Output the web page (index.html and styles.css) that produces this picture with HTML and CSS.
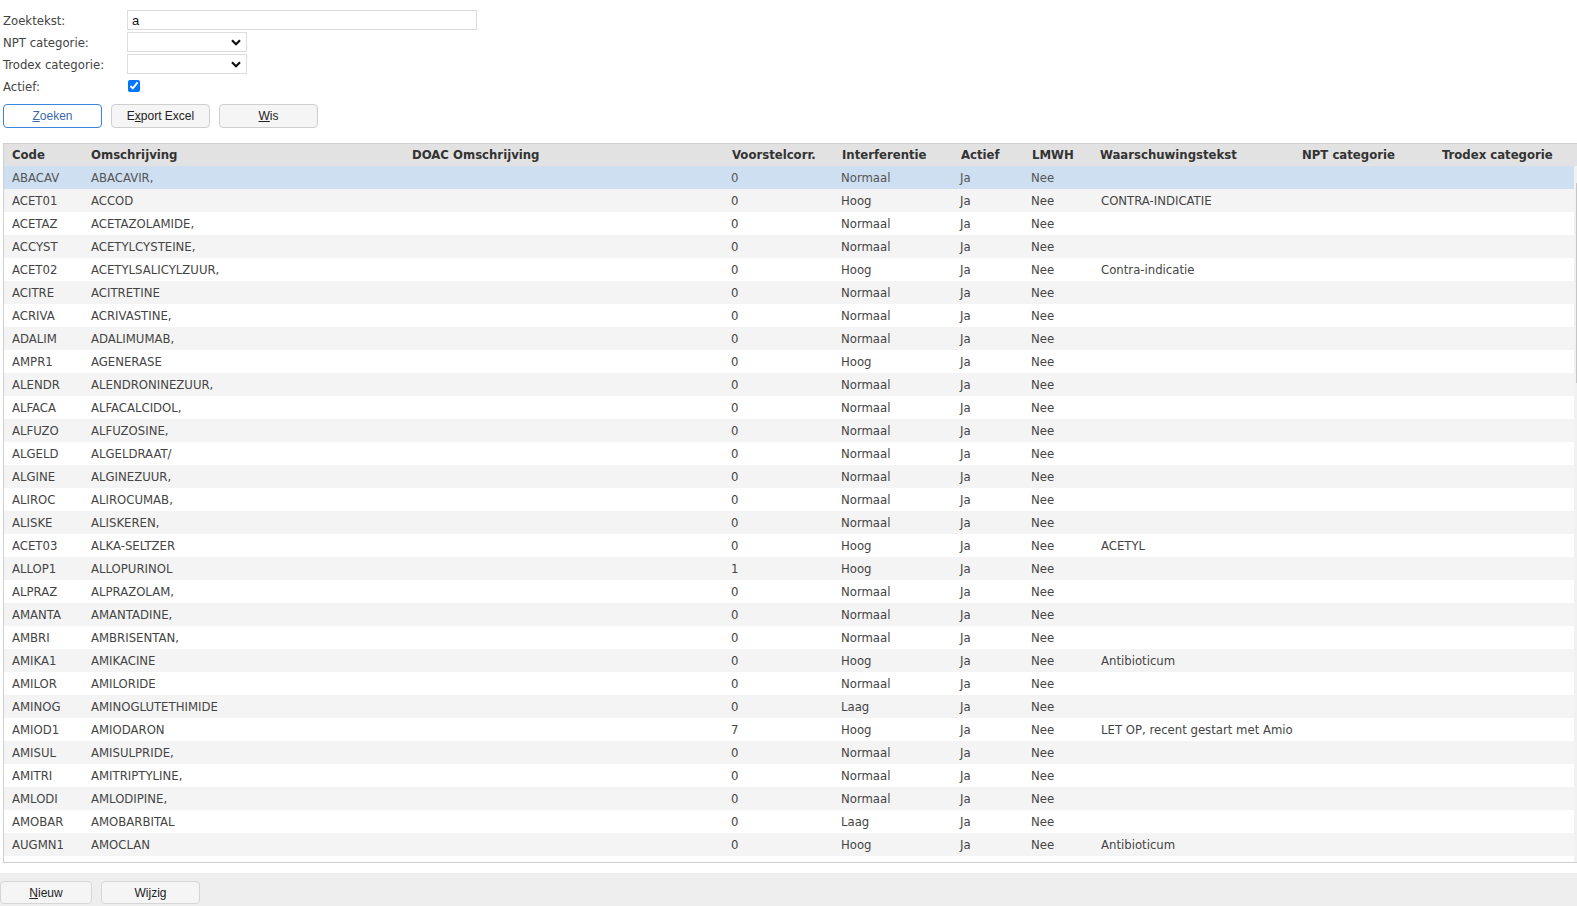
FILE: index.html
```html
<!DOCTYPE html>
<html lang="nl">
<head>
<meta charset="utf-8">
<title>Middelen</title>
<link rel="stylesheet" href="styles.css">
</head>
<body>
<div class="page">
  <form class="filters">
    <label class="lbl" for="q">Zoektekst:</label>
    <div class="ctl"><input id="q" class="text" type="text" value="a"></div>
    <label class="lbl" for="npt">NPT categorie:</label>
    <div class="ctl"><span class="select"><select id="npt"><option></option></select><svg class="chev" width="10" height="7" viewBox="0 0 10 7"><path d="M1 1.2 L5 5.2 L9 1.2" fill="none" stroke="#111" stroke-width="2.2"/></svg></span></div>
    <label class="lbl" for="tro">Trodex categorie:</label>
    <div class="ctl"><span class="select"><select id="tro"><option></option></select><svg class="chev" width="10" height="7" viewBox="0 0 10 7"><path d="M1 1.2 L5 5.2 L9 1.2" fill="none" stroke="#111" stroke-width="2.2"/></svg></span></div>
    <label class="lbl lbl-chk" for="act">Actief:</label>
    <div class="ctl ctl-chk"><input id="act" class="chk" type="checkbox" checked></div>
  </form>

  <div class="actions">
    <button type="button" class="btn btn-primary"><u>Z</u>oeken</button>
    <button type="button" class="btn">E<u>x</u>port Excel</button>
    <button type="button" class="btn"><u>W</u>is</button>
  </div>

  <div class="grid">
    <div class="grid-head">
      <table class="tbl">
        <colgroup>
          <col class="c1"><col class="c2"><col class="c3"><col class="c4"><col class="c5"><col class="c6"><col class="c7"><col class="c8"><col class="c9"><col class="c10">
        </colgroup>
        <thead>
          <tr>
            <th>Code</th><th>Omschrijving</th><th>DOAC Omschrijving</th><th>Voorstelcorr.</th><th>Interferentie</th><th>Actief</th><th>LMWH</th><th>Waarschuwingstekst</th><th>NPT categorie</th><th>Trodex categorie</th>
          </tr>
        </thead>
      </table>
    </div>
    <div class="grid-body">
      <div class="rows">
        <table class="tbl">
          <colgroup>
            <col class="c1"><col class="c2"><col class="c3"><col class="c4"><col class="c5"><col class="c6"><col class="c7"><col class="c8"><col class="c9"><col class="c10">
          </colgroup>
          <tbody>
            <tr class="sel"><td>ABACAV</td><td>ABACAVIR,</td><td></td><td>0</td><td>Normaal</td><td>Ja</td><td>Nee</td><td></td><td></td><td></td></tr>
            <tr><td>ACET01</td><td>ACCOD</td><td></td><td>0</td><td>Hoog</td><td>Ja</td><td>Nee</td><td>CONTRA-INDICATIE</td><td></td><td></td></tr>
            <tr><td>ACETAZ</td><td>ACETAZOLAMIDE,</td><td></td><td>0</td><td>Normaal</td><td>Ja</td><td>Nee</td><td></td><td></td><td></td></tr>
            <tr><td>ACCYST</td><td>ACETYLCYSTEINE,</td><td></td><td>0</td><td>Normaal</td><td>Ja</td><td>Nee</td><td></td><td></td><td></td></tr>
            <tr><td>ACET02</td><td>ACETYLSALICYLZUUR,</td><td></td><td>0</td><td>Hoog</td><td>Ja</td><td>Nee</td><td>Contra-indicatie</td><td></td><td></td></tr>
            <tr><td>ACITRE</td><td>ACITRETINE</td><td></td><td>0</td><td>Normaal</td><td>Ja</td><td>Nee</td><td></td><td></td><td></td></tr>
            <tr><td>ACRIVA</td><td>ACRIVASTINE,</td><td></td><td>0</td><td>Normaal</td><td>Ja</td><td>Nee</td><td></td><td></td><td></td></tr>
            <tr><td>ADALIM</td><td>ADALIMUMAB,</td><td></td><td>0</td><td>Normaal</td><td>Ja</td><td>Nee</td><td></td><td></td><td></td></tr>
            <tr><td>AMPR1</td><td>AGENERASE</td><td></td><td>0</td><td>Hoog</td><td>Ja</td><td>Nee</td><td></td><td></td><td></td></tr>
            <tr><td>ALENDR</td><td>ALENDRONINEZUUR,</td><td></td><td>0</td><td>Normaal</td><td>Ja</td><td>Nee</td><td></td><td></td><td></td></tr>
            <tr><td>ALFACA</td><td>ALFACALCIDOL,</td><td></td><td>0</td><td>Normaal</td><td>Ja</td><td>Nee</td><td></td><td></td><td></td></tr>
            <tr><td>ALFUZO</td><td>ALFUZOSINE,</td><td></td><td>0</td><td>Normaal</td><td>Ja</td><td>Nee</td><td></td><td></td><td></td></tr>
            <tr><td>ALGELD</td><td>ALGELDRAAT/</td><td></td><td>0</td><td>Normaal</td><td>Ja</td><td>Nee</td><td></td><td></td><td></td></tr>
            <tr><td>ALGINE</td><td>ALGINEZUUR,</td><td></td><td>0</td><td>Normaal</td><td>Ja</td><td>Nee</td><td></td><td></td><td></td></tr>
            <tr><td>ALIROC</td><td>ALIROCUMAB,</td><td></td><td>0</td><td>Normaal</td><td>Ja</td><td>Nee</td><td></td><td></td><td></td></tr>
            <tr><td>ALISKE</td><td>ALISKEREN,</td><td></td><td>0</td><td>Normaal</td><td>Ja</td><td>Nee</td><td></td><td></td><td></td></tr>
            <tr><td>ACET03</td><td>ALKA-SELTZER</td><td></td><td>0</td><td>Hoog</td><td>Ja</td><td>Nee</td><td>ACETYL</td><td></td><td></td></tr>
            <tr><td>ALLOP1</td><td>ALLOPURINOL</td><td></td><td>1</td><td>Hoog</td><td>Ja</td><td>Nee</td><td></td><td></td><td></td></tr>
            <tr><td>ALPRAZ</td><td>ALPRAZOLAM,</td><td></td><td>0</td><td>Normaal</td><td>Ja</td><td>Nee</td><td></td><td></td><td></td></tr>
            <tr><td>AMANTA</td><td>AMANTADINE,</td><td></td><td>0</td><td>Normaal</td><td>Ja</td><td>Nee</td><td></td><td></td><td></td></tr>
            <tr><td>AMBRI</td><td>AMBRISENTAN,</td><td></td><td>0</td><td>Normaal</td><td>Ja</td><td>Nee</td><td></td><td></td><td></td></tr>
            <tr><td>AMIKA1</td><td>AMIKACINE</td><td></td><td>0</td><td>Hoog</td><td>Ja</td><td>Nee</td><td>Antibioticum</td><td></td><td></td></tr>
            <tr><td>AMILOR</td><td>AMILORIDE</td><td></td><td>0</td><td>Normaal</td><td>Ja</td><td>Nee</td><td></td><td></td><td></td></tr>
            <tr><td>AMINOG</td><td>AMINOGLUTETHIMIDE</td><td></td><td>0</td><td>Laag</td><td>Ja</td><td>Nee</td><td></td><td></td><td></td></tr>
            <tr><td>AMIOD1</td><td>AMIODARON</td><td></td><td>7</td><td>Hoog</td><td>Ja</td><td>Nee</td><td>LET OP, recent gestart met Amiodaron</td><td></td><td></td></tr>
            <tr><td>AMISUL</td><td>AMISULPRIDE,</td><td></td><td>0</td><td>Normaal</td><td>Ja</td><td>Nee</td><td></td><td></td><td></td></tr>
            <tr><td>AMITRI</td><td>AMITRIPTYLINE,</td><td></td><td>0</td><td>Normaal</td><td>Ja</td><td>Nee</td><td></td><td></td><td></td></tr>
            <tr><td>AMLODI</td><td>AMLODIPINE,</td><td></td><td>0</td><td>Normaal</td><td>Ja</td><td>Nee</td><td></td><td></td><td></td></tr>
            <tr><td>AMOBAR</td><td>AMOBARBITAL</td><td></td><td>0</td><td>Laag</td><td>Ja</td><td>Nee</td><td></td><td></td><td></td></tr>
            <tr><td>AUGMN1</td><td>AMOCLAN</td><td></td><td>0</td><td>Hoog</td><td>Ja</td><td>Nee</td><td>Antibioticum</td><td></td><td></td></tr>
            <tr><td></td><td></td><td></td><td></td><td></td><td></td><td></td><td></td><td></td><td></td></tr>
          </tbody>
        </table>
      </div>
      <div class="vscroll"><div class="thumb"></div></div>
    </div>
  </div>

  <div class="footer">
    <button type="button" class="btn btn-foot btn-new"><u>N</u>ieuw</button>
    <button type="button" class="btn btn-foot">Wijzig</button>
  </div>
</div>
</body>
</html>
```

FILE: styles.css
```css
html, body {
  margin: 0;
  padding: 0;
  overflow: hidden;
  background: #fff;
}

body {
  font-family: "DejaVu Sans Condensed", "DejaVu Sans", sans-serif;
  font-size: 13px;
  color: #444;
  width: 1577px;
  height: 906px;
}

.page {
  display: flex;
  flex-direction: column;
  height: 906px;
}

/* ---------- filter form ---------- */
.filters {
  display: grid;
  grid-template-columns: 124px 1fr;
  grid-auto-rows: 20px;
  row-gap: 2px;
  margin: 10px 0 0 3px;
  align-items: center;
}

.lbl {
  color: #444;
  white-space: nowrap;
  line-height: 20px;
  padding-top: 2px;
}

.lbl-chk {
  padding-top: 1px;
}

.ctl {
  display: flex;
  align-items: center;
  height: 20px;
}

.ctl-chk {
  padding-left: 1px;
}

.text {
  box-sizing: border-box;
  width: 350px;
  height: 20px;
  border: 1px solid #dcdcdc;
  padding: 0 4px;
  margin: 0;
  font-family: "Liberation Sans", Arial, sans-serif;
  font-size: 13px;
  color: #111;
  outline: none;
}

.select {
  position: relative;
  display: inline-block;
  box-sizing: border-box;
  width: 120px;
  height: 20px;
  border: 1px solid #dcdcdc;
  background: #fff;
}

.select select {
  appearance: none;
  -webkit-appearance: none;
  border: 0;
  background: transparent;
  width: 100%;
  height: 100%;
  margin: 0;
  padding: 0 4px;
  font-family: "Liberation Sans", Arial, sans-serif;
  font-size: 13px;
  outline: none;
}

.chev {
  position: absolute;
  right: 5px;
  top: 6px;
  pointer-events: none;
}

.chk {
  width: 12px;
  height: 12px;
  margin: 0;
  accent-color: #0075ff;
}

/* ---------- buttons ---------- */
.actions {
  display: flex;
  gap: 9px;
  margin: 8px 0 0 3px;
}

.btn {
  box-sizing: border-box;
  width: 99px;
  height: 24px;
  padding: 0;
  border: 1px solid #cfcfcf;
  border-radius: 4px;
  background: #f5f5f5;
  font-family: "Liberation Sans", Arial, sans-serif;
  font-size: 12px;
  color: #222;
  cursor: pointer;
}

.btn u {
  text-decoration: underline;
  text-underline-offset: 1px;
}

.btn-primary {
  background: #fff;
  border-color: #3d85d8;
  color: #3c6aa8;
}

/* ---------- grid ---------- */
.grid {
  box-sizing: border-box;
  width: 1590px;
  margin: 15px 0 0 3px;
  border: 1px solid #cfcfcf;
  border-right: 0;
  flex: none;
}

.grid-head {
  background: #e2e2e2;
  height: 22px;
}

.tbl {
  width: 1570px;
  table-layout: fixed;
  border-collapse: collapse;
  border-spacing: 0;
}

.c1 { width: 79px; }
.c2 { width: 321px; }
.c3 { width: 319px; }
.c4 { width: 110px; }
.c5 { width: 119px; }
.c6 { width: 71px; }
.c7 { width: 68px; }
.c8 { width: 202px; }
.c9 { width: 140px; }
.c10 { width: 141px; }

.tbl th {
  height: 22px;
  padding: 0 0 2px 8px;
  box-sizing: border-box;
  text-align: left;
  font-weight: bold;
  color: #333;
  white-space: nowrap;
  overflow: hidden;
}

.tbl th:nth-child(n+4) {
  padding-left: 9px;
}

.grid-body {
  display: flex;
  height: 696px;
}

.rows {
  width: 1570px;
  height: 696px;
  overflow: hidden;
  flex: none;
}

.tbl td {
  height: 23px;
  padding: 0 0 0 8px;
  white-space: nowrap;
  overflow: hidden;
  color: #444;
}

.tbl td:nth-child(8) {
  padding-left: 10px;
}

.tbl tbody tr:nth-child(even) td {
  background: #f4f4f4;
}

.tbl tbody tr.sel td {
  background: #cddff1;
  color: #555;
}

.vscroll {
  flex: none;
  width: 16px;
  background: #f1f1f1;
  padding-top: 17px;
  box-sizing: border-box;
}

.thumb {
  margin-left: 2px;
  width: 10px;
  height: 200px;
  background: #c6c6c6;
}

/* ---------- footer ---------- */
.footer {
  margin-top: 10px;
  flex: 1;
  background: #eeeeee;
  display: flex;
  gap: 9px;
  padding-top: 8px;
  box-sizing: border-box;
}

.btn-foot {
  height: 23px;
  background: #f5f5f5;
  border-color: #d6d6d6;
}

.btn-new {
  width: 92px;
}
```
